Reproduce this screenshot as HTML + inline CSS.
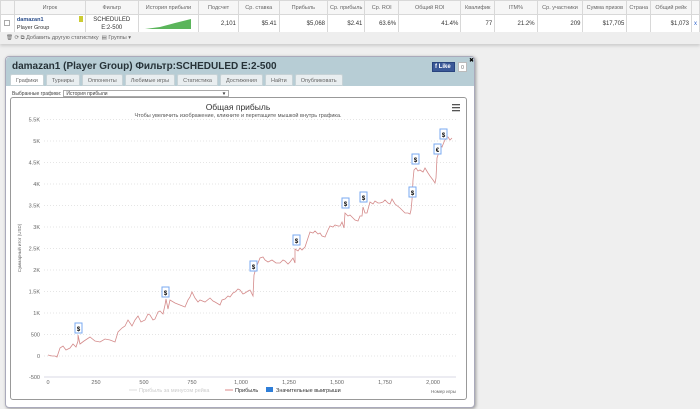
<!DOCTYPE html>
<html><head><meta charset="utf-8"><style>
*{margin:0;padding:0;box-sizing:border-box}
body{width:700px;height:409px;overflow:hidden;background:#efefef;font-family:"Liberation Sans",Arial,sans-serif;position:relative}
.top{position:absolute;left:0;top:0;width:700px;height:44px;background:#fff;border-bottom:1px solid #ccc;box-shadow:0 2px 3px #ccc}
table{border-collapse:collapse;position:absolute;left:0;top:0;width:700px;font-size:5.5px;color:#555}
td,th{border:1px solid #d8d8d8;font-weight:normal;text-align:right;padding:0 2px;white-space:nowrap;overflow:hidden}
th{height:14px;background:#f6f6f6;text-align:center;color:#666}
td{height:18px;color:#333;font-size:6px}
.tb{position:absolute;left:0;top:32px;width:700px;height:12px;background:#eee;font-size:5.5px;color:#666;padding:3px 6px}
.panel{position:absolute;left:5px;top:56px;width:470px;height:352px;background:#fff;border:1px solid #aab;border-radius:4px;box-shadow:1px 1px 3px #999}
.hd{height:29px;background:#b7cdd5;border-radius:4px 4px 0 0;position:relative}
.ttl{position:absolute;left:6px;top:4px;font-size:10px;font-weight:bold;color:#263238}
.tabs{position:absolute;left:4px;top:17px;display:flex;gap:2px}
.tab{height:12px;background:#e9eef0;border:1px solid #c6d2d6;font-size:5.5px;color:#666;padding:3px 5px 0;border-radius:2px 2px 0 0}
.tab.a{background:#fff}
.sel{position:absolute;left:6px;top:33px;font-size:5px;color:#444}
.sel span{display:inline-block;width:166px;height:7px;border:1px solid #aaa;margin-left:2px;padding-left:2px;position:relative}
.chart{position:absolute;left:4px;top:40px;width:457px;height:303px;border:1px solid #999;border-radius:3px}
</style></head><body>
<div class="top">
<table>
<tr><th style="width:14px"></th><th style="width:72px">Игрок</th><th style="width:53px">Фильтр</th><th style="width:61px">История прибыли</th><th style="width:40px">Подсчет</th><th style="width:41px">Ср. ставка</th><th style="width:49px">Прибыль</th><th style="width:36px">Ср. прибыль</th><th style="width:34px">Ср. ROI</th><th style="width:63px">Общий ROI</th><th style="width:34px">Квалифик</th><th style="width:43px">ITM%</th><th style="width:46px">Ср. участники</th><th style="width:44px">Сумма призов</th><th style="width:15px">Страна</th><th style="width:41px">Общий рейк</th><th></th></tr>
<tr><td style="text-align:center"><span style="display:inline-block;width:6px;height:6px;border:1px solid #aaa"></span></td><td style="text-align:left;line-height:8px;font-size:5.5px"><b style="color:#2a4d8a">damazan1</b><span style="float:right;width:4px;height:6px;background:#cc3"></span><br>Player Group</td><td style="text-align:center;line-height:8px">SCHEDULED<br>E:2-500</td><td><svg width="46" height="10" style="display:block;margin:auto"><polygon points="0,10 46,10 46,0 30,4 15,8" fill="#5bb55b"/></svg></td><td>2,101</td><td>$5.41</td><td>$5,068</td><td>$2.41</td><td>63.6%</td><td>41.4%</td><td>77</td><td>21.2%</td><td>209</td><td>$17,705</td><td></td><td>$1,073</td><td style="color:#36c;text-align:center">x</td></tr>
</table>
<div class="tb">🗑 ⟳ ⧉ Добавить другую статистику &nbsp;▤ Группы ▾</div>
</div>
<div class="panel">
<div class="hd"><div class="ttl">damazan1 (Player Group) Фильтр:SCHEDULED E:2-500</div>
<div style="position:absolute;left:426px;top:5px;width:23px;height:10px;background:#3b5998;border:1px solid #29447e;color:#fff;font-size:6px;font-weight:bold;padding:1px 2px">f Like</div>
<div style="position:absolute;left:452px;top:5px;width:9px;height:10px;background:#fff;border:1px solid #bbb;font-size:5px;text-align:center;color:#666;padding-top:2px">0</div>
<div style="position:absolute;left:463px;top:0;font-size:6px">✖</div>
<div class="tabs"><div class="tab a">Графики</div><div class="tab">Турниры</div><div class="tab">Оппоненты</div><div class="tab">Любимые игры</div><div class="tab">Статистика</div><div class="tab">Достижения</div><div class="tab">Найти</div><div class="tab">Опубликовать</div></div>
</div>
<div class="sel">Выбранные графики:<span>История прибыли<b style="position:absolute;right:3px;top:0">▾</b></span></div>
<div class="chart"></div>
</div>
<svg style="position:absolute;left:0;top:0" width="700" height="409" font-family="Liberation Sans,sans-serif">
<text x="238" y="110" font-size="8.5" fill="#333" text-anchor="middle">Общая прибыль</text>
<text x="238" y="117" font-size="5.5" fill="#555" text-anchor="middle">Чтобы увеличить изображение, кликните и перетащите мышкой внутрь графика.</text>
<g fill="#555"><rect x="452" y="104" width="8" height="1.3"/><rect x="452" y="107" width="8" height="1.3"/><rect x="452" y="110" width="8" height="1.3"/></g>
<g stroke="#ddd" stroke-dasharray="1,2" stroke-width="0.8">
<line x1="44" x2="456" y1="119.5" y2="119.5"/><line x1="44" x2="456" y1="141" y2="141"/><line x1="44" x2="456" y1="162.5" y2="162.5"/><line x1="44" x2="456" y1="184" y2="184"/><line x1="44" x2="456" y1="205.5" y2="205.5"/><line x1="44" x2="456" y1="227" y2="227"/><line x1="44" x2="456" y1="248.5" y2="248.5"/><line x1="44" x2="456" y1="270" y2="270"/><line x1="44" x2="456" y1="291.5" y2="291.5"/><line x1="44" x2="456" y1="313" y2="313"/><line x1="44" x2="456" y1="334.5" y2="334.5"/><line x1="44" x2="456" y1="356" y2="356"/></g>
<line x1="44" x2="456" y1="377" y2="377" stroke="#ccd" stroke-width="0.8"/>
<g font-size="5.5" fill="#666" text-anchor="end">
<text x="40" y="121.5">5.5K</text><text x="40" y="143">5K</text><text x="40" y="164.5">4.5K</text><text x="40" y="186">4K</text><text x="40" y="207.5">3.5K</text><text x="40" y="229">3K</text><text x="40" y="250.5">2.5K</text><text x="40" y="272">2K</text><text x="40" y="293.5">1.5K</text><text x="40" y="315">1K</text><text x="40" y="336.5">500</text><text x="40" y="358">0</text><text x="40" y="379">-500</text></g>
<g font-size="5.5" fill="#666" text-anchor="middle">
<text x="48" y="384">0</text><text x="96" y="384">250</text><text x="144" y="384">500</text><text x="192" y="384">750</text><text x="241" y="384">1,000</text><text x="289" y="384">1,250</text><text x="337" y="384">1,500</text><text x="385" y="384">1,750</text><text x="433" y="384">2,000</text></g>
<text x="21" y="248" font-size="4.5" fill="#666" transform="rotate(-90 21 248)" text-anchor="middle">Суммарный итог (USD)</text>
<text x="456" y="393" font-size="4.5" fill="#666" text-anchor="end">Номер игры</text>
<g font-size="5.5"><line x1="129" x2="137" y1="390" y2="390" stroke="#ddd"/><text x="139" y="392" fill="#ccc">Прибыль за минусом рейка</text>
<line x1="225" x2="233" y1="390" y2="390" stroke="#d88"/><text x="235" y="392" fill="#333">Прибыль</text>
<rect x="266" y="387" width="7" height="5" fill="#2f7ed8"/><text x="276" y="392" fill="#333">Значительные выигрыши</text></g>
<polyline fill="none" stroke="#d48a8a" stroke-width="0.8" points="48,355 52,356 55,356 57,357 60,348 63,346 66,350 70,348 73,344 76,347 78,341 78,335 80,344 84,341 90,337 95,341 100,342 105,339 110,340 115,342 118,332 122,328 125,326 128,320 132,326 135,320 138,316 141,322 145,320 148,314 150,315 153,320 155,319 158,312 160,311 163,314 165,305 166,299 168,309 170,300 175,303 180,305 185,307 188,300 190,297 192,292 195,298 198,302 200,300 205,302 210,298 213,301 215,302 220,305 222,300 225,299 228,296 230,297 233,293 235,292 238,289 240,290 243,294 245,293 248,291 250,290 253,296 254,275 256,268 260,258 263,257 265,260 268,262 272,260 276,263 280,263 283,260 285,261 288,264 290,262 293,258 295,263 295,249 298,251 300,248 302,250 305,247 308,238 310,232 313,233 315,231 318,234 320,233 322,236 325,237 328,230 330,226 333,227 335,225 338,226 340,226 342,222 344,228 345,213 348,216 350,215 353,218 355,220 358,221 360,216 362,216 363,207 365,213 367,213 370,202 373,204 375,201 378,203 380,203 383,202 385,200 388,203 390,204 392,199 395,204 400,208 405,213 408,213 410,214 411,210 412,200 413,180 414,170 416,168 418,171 420,170 423,172 425,168 428,173 430,176 433,180 435,183 436,178 437,158 439,152 440,145 442,147 444,142 445,140 447,137 448,137 450,140 452,138"/>
<g font-size="6" font-weight="bold" fill="#000" text-anchor="middle">
<g><rect x="75" y="323" width="7" height="10" fill="#fff" stroke="#7aaaf0"/><text x="78.5" y="331">$</text></g>
<g><rect x="162" y="287" width="7" height="10" fill="#fff" stroke="#7aaaf0"/><text x="165.5" y="295">$</text></g>
<g><rect x="250" y="261" width="7" height="10" fill="#fff" stroke="#7aaaf0"/><text x="253.5" y="269">$</text></g>
<g><rect x="293" y="235" width="7" height="10" fill="#fff" stroke="#7aaaf0"/><text x="296.5" y="243">$</text></g>
<g><rect x="342" y="198" width="7" height="10" fill="#fff" stroke="#7aaaf0"/><text x="345.5" y="206">$</text></g>
<g><rect x="360" y="192" width="7" height="10" fill="#fff" stroke="#7aaaf0"/><text x="363.5" y="200">$</text></g>
<g><rect x="409" y="187" width="7" height="10" fill="#fff" stroke="#7aaaf0"/><text x="412.5" y="195">$</text></g>
<g><rect x="412" y="154" width="7" height="10" fill="#fff" stroke="#7aaaf0"/><text x="415.5" y="162">$</text></g>
<g><rect x="434" y="144" width="7" height="10" fill="#fff" stroke="#7aaaf0"/><text x="437.5" y="152">€</text></g>
<g><rect x="440" y="129" width="7" height="10" fill="#fff" stroke="#7aaaf0"/><text x="443.5" y="137">$</text></g>
</g>
</svg>
</body></html>
